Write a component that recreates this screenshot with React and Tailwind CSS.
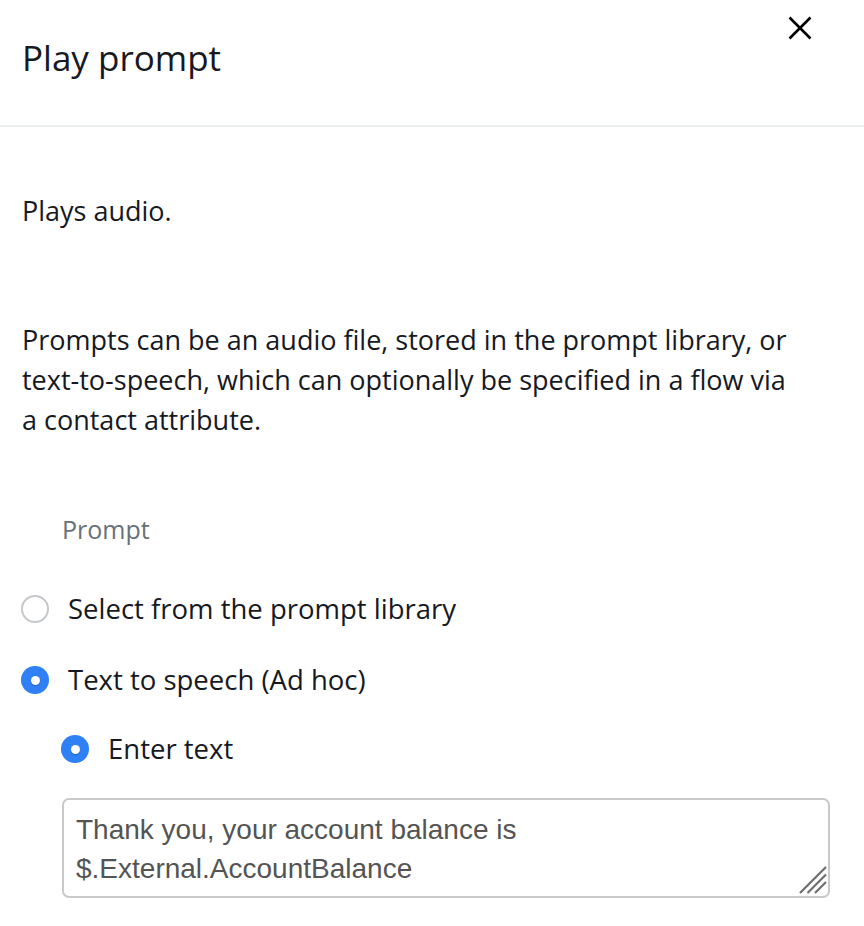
import { useState } from 'react';

const Radio = ({ checked, onClick }) => (
    <button
        type="button"
        onClick={onClick}
        className={
            checked
                ? 'w-[28px] h-[28px] rounded-full bg-[#2f80f5] flex items-center justify-center shrink-0'
                : 'w-[28px] h-[28px] rounded-full border-2 border-[#c4c7cb] bg-white shrink-0'
        }
    >
        {checked && <span className="w-[9px] h-[9px] rounded-full bg-white shadow-[0_1px_1px_rgba(0,0,0,0.25)]" />}
    </button>
);

const App = () => {
    const [source, setSource] = useState('tts');
    const [text, setText] = useState('Thank you, your account balance is $.External.AccountBalance');

    return (
        <div className="w-[864px] h-[926px] bg-white text-[#16191f] font-['Open_Sans',sans-serif] overflow-hidden">
            <div className="relative h-[127px] border-b-2 border-[#eaeded] px-[22px] pt-[36px]">
                <h2 className="text-[35px] leading-[44px] font-normal">Play prompt</h2>
                <button className="absolute right-[52px] top-[16px] w-[24px] h-[24px]">
                    <svg viewBox="0 0 24 24" className="w-[24px] h-[24px]" fill="none" stroke="#000" strokeWidth="2.6">
                        <path d="M1.5 1.5 L22.5 22.5 M22.5 1.5 L1.5 22.5" />
                    </svg>
                </button>
            </div>

            <div className="px-[21px]">
                <p className="mt-[64px] pl-[1px] text-[27px] leading-[40px]">Plays audio.</p>

                <p className="mt-[89px] pl-[1px] pr-[48px] text-[27px] leading-[40px]">
                    Prompts can be an audio file, stored in the prompt library, or text-to-speech, which can optionally be specified in a flow via a contact attribute.
                </p>

                <div className="mt-[69px] pl-[41px] text-[25px] leading-[40px] font-medium text-[#687078]">Prompt</div>

                <div className="mt-[40px] flex flex-col gap-[31px]">
                    <label className="flex items-center gap-[19px] h-[40px] cursor-pointer" onClick={() => setSource('library')}>
                        <Radio checked={source === 'library'} />
                        <span className="text-[27.5px] leading-[40px]">Select from the prompt library</span>
                    </label>
                    <label className="flex items-center gap-[19px] h-[40px] cursor-pointer" onClick={() => setSource('tts')}>
                        <Radio checked={source === 'tts'} />
                        <span className="text-[27.5px] leading-[40px]">Text to speech (Ad hoc)</span>
                    </label>
                </div>

                {source === 'tts' && (
                    <div className="pl-[40px]">
                        <label className="mt-[29px] flex items-center gap-[19px] h-[40px]">
                            <Radio checked />
                            <span className="text-[27.5px] leading-[40px]">Enter text</span>
                        </label>
                        <div className="relative mt-[29px] w-[769px] pl-[1px]">
                            <textarea
                                value={text}
                                onChange={(e) => setText(e.target.value)}
                                className="block w-full h-[100px] resize-none border-2 border-[#c9c9c9] rounded-[7px] px-[12px] pt-[10px] text-[28px] leading-[39px] text-[#545454] font-['Liberation_Sans',sans-serif] outline-none"
                            />
                            <svg viewBox="0 0 28 28" className="absolute right-[3px] bottom-[4px] w-[28px] h-[28px] pointer-events-none" stroke="#6e6e6e" strokeWidth="2.2">
                                <path d="M1 27 L27 1 M8.5 27 L27 8.5 M16 27 L27 16" />
                            </svg>
                        </div>
                    </div>
                )}
            </div>
        </div>
    );
};

export default App;
